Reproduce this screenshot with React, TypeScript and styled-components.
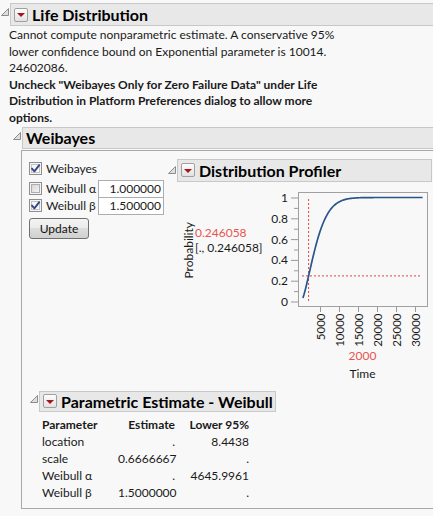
import React from "react";
import styled, { createGlobalStyle } from "styled-components";

const FONT = `"Lato", "Noto Sans", "DejaVu Sans", sans-serif`;

const GlobalStyle = createGlobalStyle`
  html, body { margin: 0; padding: 0; background: #f8f8f8; }
  body { font-family: ${FONT}; font-size: 12px; color: #1a1a1a; overflow: hidden; }
`;

const Page = styled.div`
  width: 433px;
  height: 516px;
  overflow: hidden;
  box-sizing: border-box;
  padding: 3px 0 0 1px;
  background: #f8f8f8;
`;

const HeaderRow = styled.div<{ $indent?: number }>`
  display: flex;
  align-items: flex-start;
  gap: 1px;
  margin-left: ${(p) => p.$indent ?? 0}px;
`;

const DiscSvg = styled.svg<{ $top: number }>`
  flex: none;
  margin-top: ${(p) => p.$top}px;
`;

const Disclosure = ({ top = 5 }: { top?: number }) => (
  <DiscSvg $top={top} width="8" height="8" viewBox="0 0 8 8">
    <polygon points="7.5,0.5 7.5,7.5 0.5,7.5" fill="#dedede" stroke="#8c8c8c" strokeWidth="1" />
  </DiscSvg>
);

const HeaderBox = styled.div<{ $width?: number; $height?: number }>`
  box-sizing: border-box;
  height: ${(p) => p.$height ?? 22}px;
  ${(p) => (p.$width ? `width: ${p.$width}px; flex: none;` : `flex: 1; margin-right: -4px;`)}
  border: 1px solid #c8c8c8;
  background: #e8e8e8;
  display: flex;
  align-items: center;
  gap: 4px;
  padding-left: 3px;
  font: bold 16px ${FONT};
  color: #000;
  white-space: nowrap;
`;

const MenuButton = styled.span`
  flex: none;
  width: 14px;
  height: 14px;
  box-sizing: border-box;
  border: 1px solid #a0a0a0;
  border-radius: 2px;
  background: linear-gradient(#fdfdfd, #e2e2e2);
  display: flex;
  align-items: center;
  justify-content: center;
  &::after {
    content: "";
    border-left: 4px solid transparent;
    border-right: 4px solid transparent;
    border-top: 4px solid #a3161a;
    margin-top: 1px;
  }
`;

const Message = styled.div`
  margin: 1px 0 0 8px;
  font-size: 12px;
  line-height: 16.6px;
  color: #1a1a1a;
  white-space: nowrap;
`;

const Line = styled.div<{ $bold?: boolean }>`
  font-weight: ${(p) => (p.$bold ? 700 : 400)};
`;

const OutlineBox = styled.div`
  margin: 1px -4px 0 20px;
  border: 1px solid #a8a8a8;
  padding-bottom: 7px;
`;

const TopRow = styled.div`
  display: flex;
`;

const ControlsCol = styled.div`
  flex: none;
  width: 146px;
  box-sizing: border-box;
  padding: 9px 0 0 7px;
  display: flex;
  flex-direction: column;
  align-items: flex-start;
`;

const CheckRow = styled.div<{ $gapAfter?: number }>`
  display: flex;
  align-items: flex-start;
  height: 17px;
  margin-bottom: ${(p) => p.$gapAfter ?? 0}px;
`;

const CheckLabel = styled.span<{ $width?: number }>`
  margin-left: 4px;
  line-height: 17px;
  ${(p) => (p.$width ? `width: ${p.$width}px;` : "")}
  white-space: nowrap;
`;

const CheckSvg = styled.svg`
  flex: none;
  margin-top: 2px;
`;

const CheckBox = ({ checked }: { checked: boolean }) => (
  <CheckSvg width="13" height="13" viewBox="0 0 13 13">
    <defs>
      <linearGradient id={checked ? "cbOn" : "cbOff"} x1="0" y1="0" x2="1" y2="1">
        <stop offset="0" stopColor={checked ? "#f4f4f4" : "#d4d4d4"} />
        <stop offset="1" stopColor={checked ? "#ffffff" : "#f6f6f6"} />
      </linearGradient>
    </defs>
    <rect x="0.5" y="0.5" width="12" height="12" fill="#f4f4f4" stroke="#8e8f8f" />
    <rect x="2.5" y="2.5" width="8" height="8" fill={`url(#${checked ? "cbOn" : "cbOff"})`} stroke={checked ? "#c4c4c4" : "#aeaeae"} />
    {checked && (
      <path d="M3 6.6 L5.4 9.3 L10.2 3.2" fill="none" stroke="#35468a" strokeWidth="1.9" strokeLinecap="round" strokeLinejoin="round" />
    )}
  </CheckSvg>
);

const ValueBox = styled.div`
  flex: none;
  width: 66px;
  height: 18px;
  box-sizing: border-box;
  border: 1px solid #abadb3;
  background: #fff;
  text-align: right;
  padding-right: 2px;
  line-height: 16px;
`;

const UpdateButton = styled.button`
  margin-top: 4px;
  width: 60px;
  height: 21px;
  box-sizing: border-box;
  border: 1px solid #707070;
  border-radius: 3px;
  background: linear-gradient(#f3f3f3 0%, #ebebeb 50%, #dddddd 50%, #d0d0d0 100%);
  font: 12px ${FONT};
  color: #111;
  padding: 0;
`;

const ProfilerCol = styled.div`
  flex: none;
  width: 263px;
  padding-top: 8px;
`;

const ProfilerBody = styled.div`
  display: grid;
  grid-template-columns: 12px 67px 171px;
  padding-left: 15px;
  align-items: start;
`;

const YTitle = styled.div`
  margin-top: 40px;
  writing-mode: vertical-rl;
  transform: rotate(180deg);
  line-height: 12px;
  white-space: nowrap;
`;

const Values = styled.div`
  margin-top: 43px;
  line-height: 15.5px;
  white-space: nowrap;
`;

const RedValue = styled.div`
  color: #e8554e;
`;

const ChartCol = styled.div`
  display: flex;
  flex-direction: column;
`;

const ChartSvg = styled.svg`
  margin-top: 3px;
  display: block;
  overflow: visible;
  text {
    font-family: ${FONT};
    font-size: 12px;
    fill: #1a1a1a;
  }
  text.xl {
    font-size: 11.5px;
  }
`;

const AxisCaption = styled.div<{ $red?: boolean }>`
  margin-left: 36px;
  width: 129px;
  text-align: center;
  line-height: 18px;
  color: ${(p) => (p.$red ? "#e8554e" : "#1a1a1a")};
`;

const ParamSection = styled.div`
  margin-top: 8px;
  padding-left: 8px;
`;

const Table = styled.div`
  margin: 4px 0 0 12px;
  display: grid;
  grid-template-columns: 76px 57px 74px;
  grid-auto-rows: 17px;
  align-items: center;
  white-space: nowrap;
`;

const Cell = styled.div<{ $right?: boolean; $bold?: boolean }>`
  text-align: ${(p) => (p.$right ? "right" : "left")};
  font-weight: ${(p) => (p.$bold ? 700 : 400)};
`;

const ALPHA = 4645.9961;
const BETA = 1.5;
const xOf = (t: number) => 39 + t * 0.0038;
const yOf = (f: number) => 12.5 + (1 - f) * 104;

const curvePath = (() => {
  const pts: string[] = [];
  for (let t = 500; t <= 32000; t += 250) {
    const f = 1 - Math.exp(-Math.pow(t / ALPHA, BETA));
    pts.push(`${xOf(t).toFixed(2)},${yOf(f).toFixed(2)}`);
  }
  return "M" + pts.join(" L");
})();

const Chart = () => {
  const yLabels = [1, 0.8, 0.6, 0.4, 0.2, 0];
  const minors = [0.9, 0.7, 0.5, 0.3, 0.1];
  const xTicks = [5000, 10000, 15000, 20000, 25000, 30000];
  const hy = yOf(0.246058);
  const vx = xOf(2000);
  return (
    <ChartSvg width="171" height="162" viewBox="0 0 171 162">
      {yLabels.map((v) => (
        <g key={v}>
          <line x1="29" x2="36" y1={yOf(v) + 0.5} y2={yOf(v) + 0.5} stroke="#999" />
          <text x="26" y={yOf(v)} textAnchor="end" dominantBaseline="central">
            {v === 0 || v === 1 ? String(v) : v.toFixed(1)}
          </text>
        </g>
      ))}
      {minors.map((v) => (
        <line key={v} x1="32" x2="36" y1={yOf(v) + 0.5} y2={yOf(v) + 0.5} stroke="#999" />
      ))}
      {xTicks.map((t) => (
        <g key={t}>
          <line x1={Math.round(xOf(t)) + 0.5} x2={Math.round(xOf(t)) + 0.5} y1="122" y2="127" stroke="#999" />
          <text
            className="xl"
            x={xOf(t)}
            y="128.5"
            textAnchor="end"
            dominantBaseline="central"
            transform={`rotate(-90 ${xOf(t)} 128.5)`}
          >
            {t}
          </text>
        </g>
      ))}
      <rect x="36.5" y="7.5" width="129" height="114" fill="none" stroke="#a0a0a0" />
      <line x1="40" x2="160" y1={hy} y2={hy} stroke="#e0453e" strokeDasharray="2 2" />
      <line x1={vx} x2={vx} y1="14" y2="117" stroke="#e0453e" strokeDasharray="2 2" />
      <path d={curvePath} fill="none" stroke="#27558c" strokeWidth="1.7" />
    </ChartSvg>
  );
};

export default function App() {
  return (
    <>
      <GlobalStyle />
      <Page>
        <HeaderRow>
          <Disclosure />
          <HeaderBox $height={23}>
            <MenuButton />
            Life Distribution
          </HeaderBox>
        </HeaderRow>
        <Message>
          <Line>Cannot compute nonparametric estimate. A conservative 95%</Line>
          <Line>lower confidence bound on Exponential parameter is 10014.</Line>
          <Line>24602086.</Line>
          <Line $bold>Uncheck "Weibayes Only for Zero Failure Data" under Life</Line>
          <Line $bold>Distribution in Platform Preferences dialog to allow more</Line>
          <Line $bold>options.</Line>
        </Message>

        <HeaderRow $indent={12}>
          <Disclosure />
          <HeaderBox>Weibayes</HeaderBox>
        </HeaderRow>
        <OutlineBox>
          <TopRow>
            <ControlsCol>
              <CheckRow $gapAfter={3}>
                <CheckBox checked />
                <CheckLabel>Weibayes</CheckLabel>
              </CheckRow>
              <CheckRow>
                <CheckBox checked={false} />
                <CheckLabel $width={52}>Weibull α</CheckLabel>
                <ValueBox>1.000000</ValueBox>
              </CheckRow>
              <CheckRow>
                <CheckBox checked />
                <CheckLabel $width={52}>Weibull β</CheckLabel>
                <ValueBox>1.500000</ValueBox>
              </CheckRow>
              <UpdateButton>Update</UpdateButton>
            </ControlsCol>

            <ProfilerCol>
              <HeaderRow>
                <Disclosure top={7} />
                <HeaderBox $width={255} $height={23}>
                  <MenuButton />
                  Distribution Profiler
                </HeaderBox>
              </HeaderRow>
              <ProfilerBody>
                <YTitle>Probability</YTitle>
                <Values>
                  <RedValue>0.246058</RedValue>
                  <div>[., 0.246058]</div>
                </Values>
                <ChartCol>
                  <Chart />
                  <AxisCaption $red>2000</AxisCaption>
                  <AxisCaption>Time</AxisCaption>
                </ChartCol>
              </ProfilerBody>
            </ProfilerCol>
          </TopRow>

          <ParamSection>
            <HeaderRow>
              <Disclosure top={4} />
              <HeaderBox $width={237} $height={21}>
                <MenuButton />
                Parametric Estimate - Weibull
              </HeaderBox>
            </HeaderRow>
            <Table>
              <Cell $bold>Parameter</Cell>
              <Cell $bold $right>Estimate</Cell>
              <Cell $bold $right>Lower 95%</Cell>
              <Cell>location</Cell>
              <Cell $right>.</Cell>
              <Cell $right>8.4438</Cell>
              <Cell>scale</Cell>
              <Cell $right>0.6666667</Cell>
              <Cell $right>.</Cell>
              <Cell>Weibull α</Cell>
              <Cell $right>.</Cell>
              <Cell $right>4645.9961</Cell>
              <Cell>Weibull β</Cell>
              <Cell $right>1.5000000</Cell>
              <Cell $right>.</Cell>
            </Table>
          </ParamSection>
        </OutlineBox>
      </Page>
    </>
  );
}
